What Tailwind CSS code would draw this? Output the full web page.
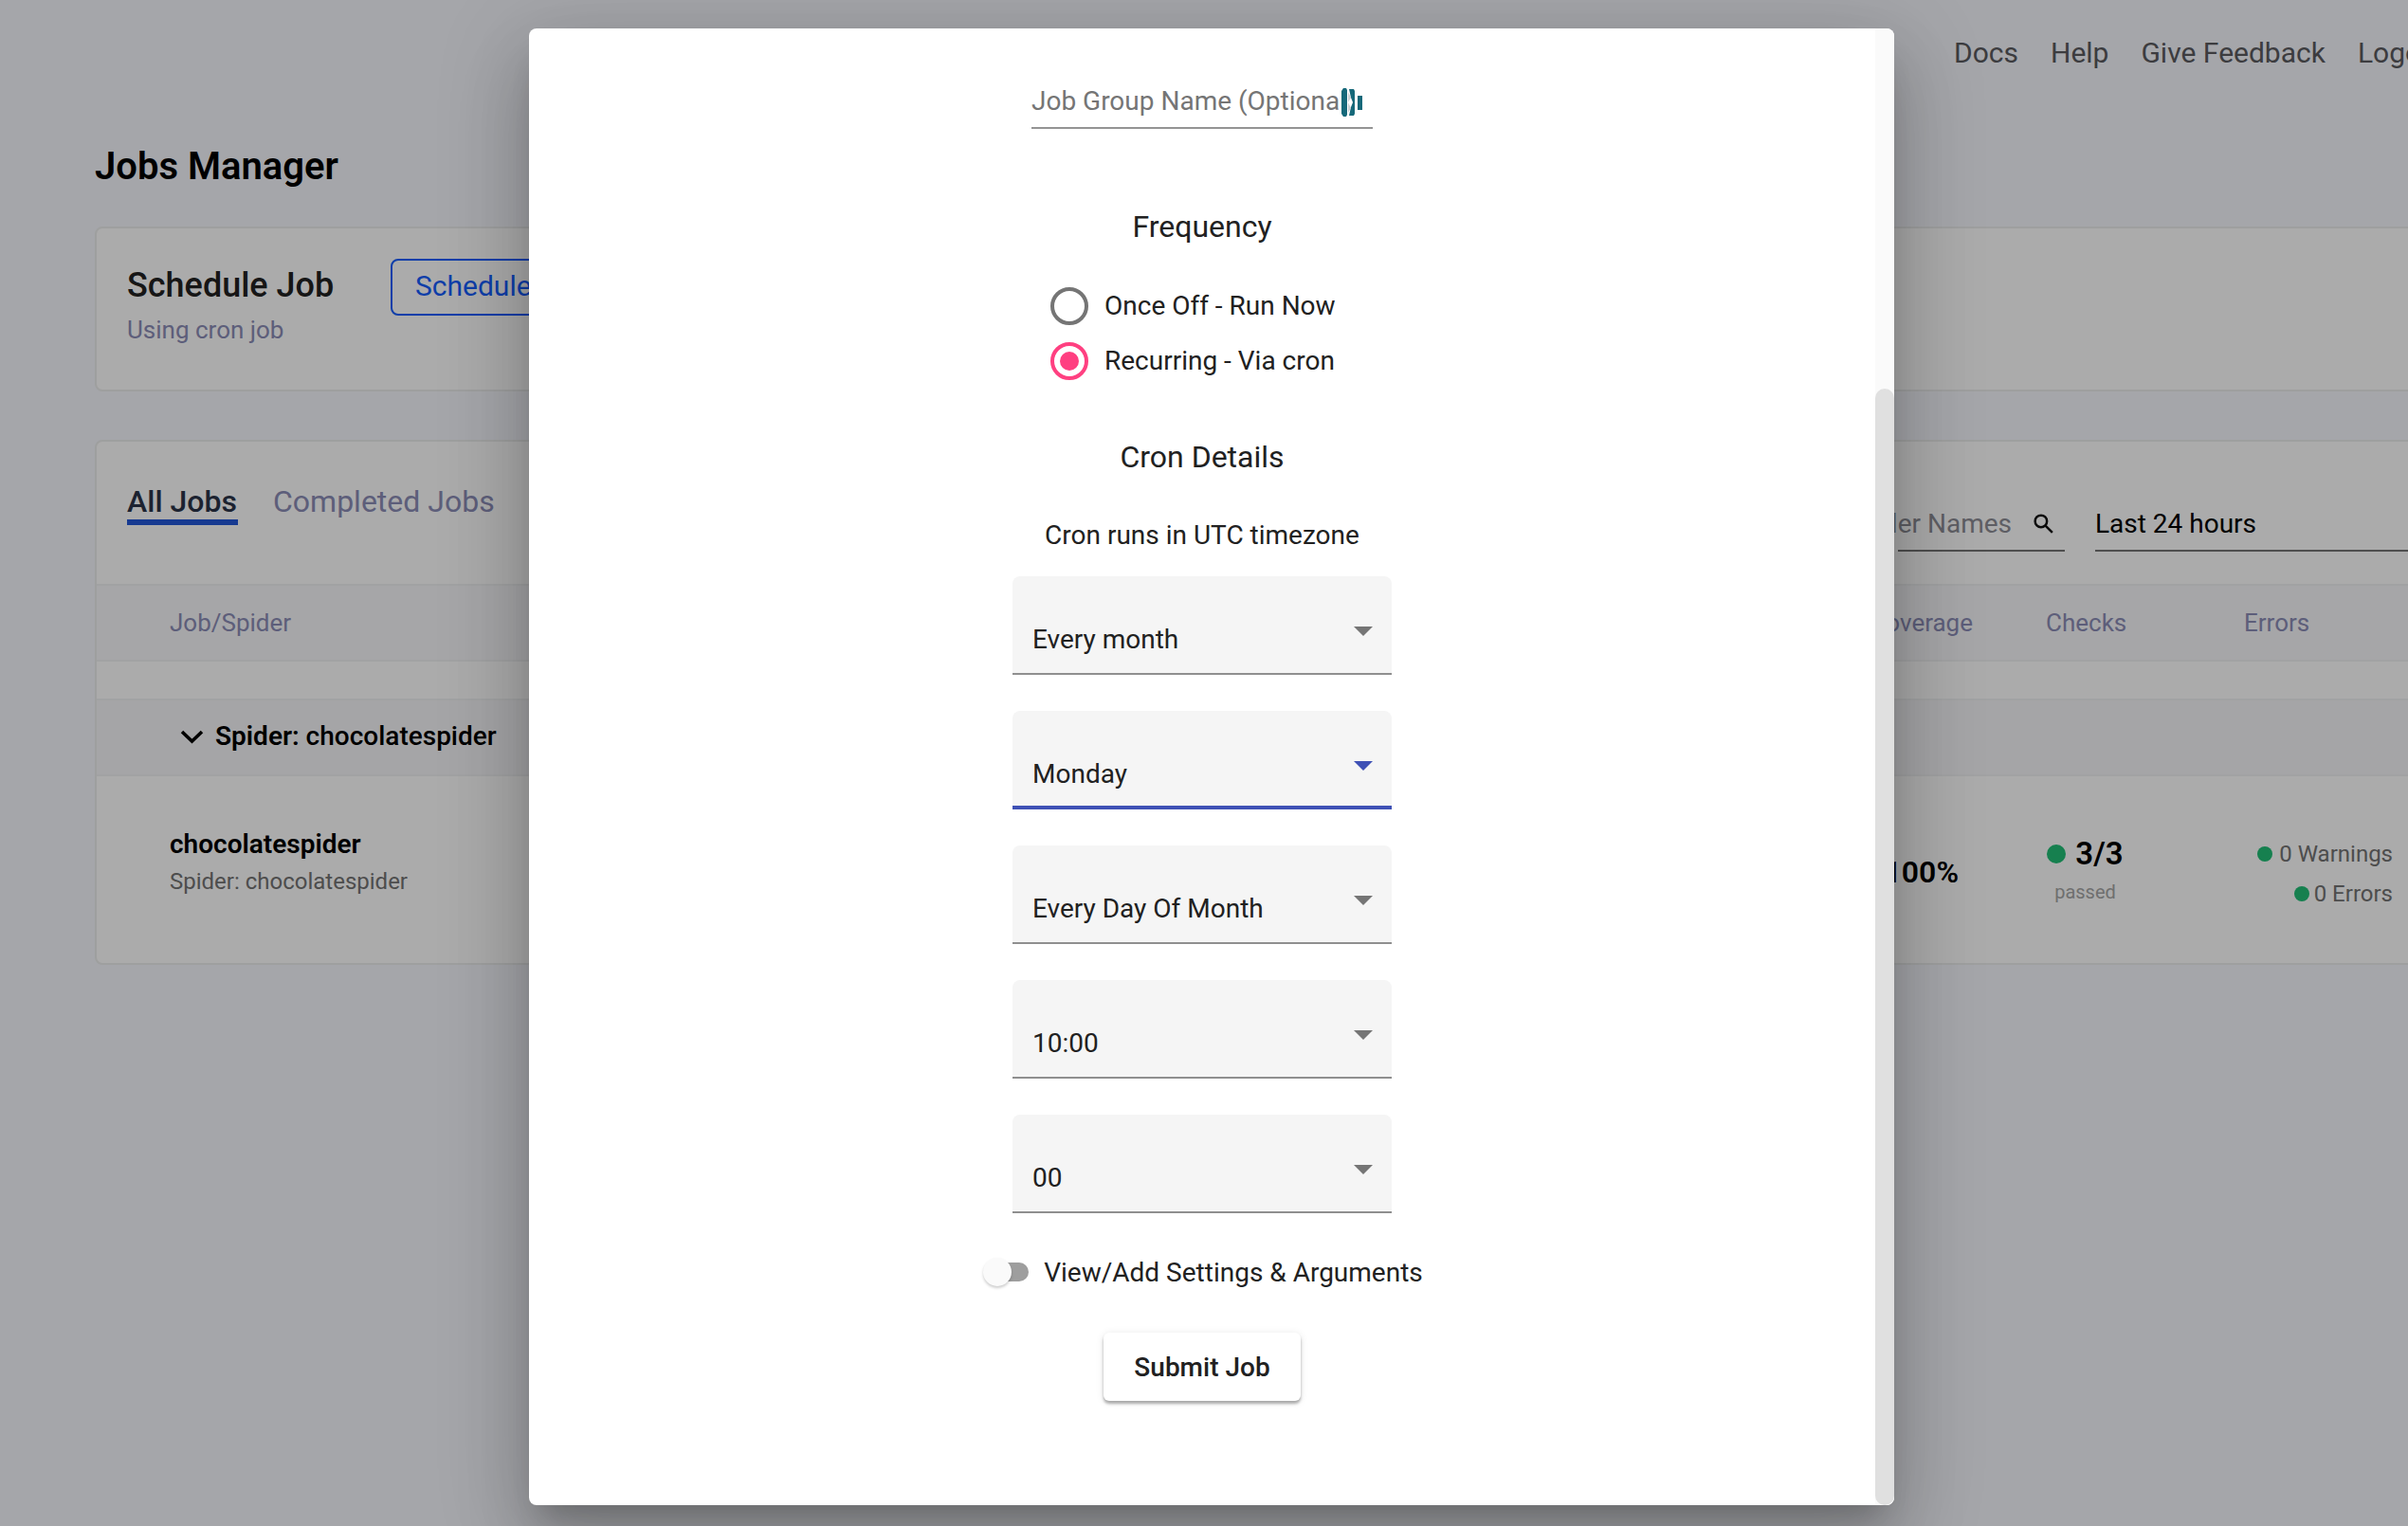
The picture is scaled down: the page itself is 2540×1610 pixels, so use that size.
<!DOCTYPE html>
<html>
<head>
<meta charset="utf-8">
<script src="https://cdn.jsdelivr.net/npm/@tailwindcss/browser@4"></script>
<title>Jobs Manager</title>
</head>
<body>
<div class="relative w-[2540px] h-[1610px] overflow-hidden bg-[#f6f8fe] font-['Roboto',sans-serif] text-black">
  <header class="h-[110px] flex items-center pl-[2061px] gap-[34px] text-[30px] font-normal text-[#5a5a5e] whitespace-nowrap">
    <span>Docs</span><span>Help</span><span>Give Feedback</span><span>Logout</span>
  </header>
  <main class="pl-[100px] w-[2700px]">
    <h1 class="h-[44px] mt-[44px] leading-[44px] text-[40px] font-semibold text-black">Jobs Manager</h1>
    <section class="mt-[41px] h-[174px] bg-white border-2 border-[#eceded] rounded-[8px] pl-[32px] pt-[36px] flex gap-[60px]">
      <div class="w-[218px] whitespace-nowrap">
        <div class="text-[36px] leading-[48px] font-medium text-[#222]">Schedule Job</div>
        <div class="text-[26px] leading-[34px] mt-[6px] text-[#8b8cb6]">Using cron job</div>
      </div>
      <div class="mt-[-4px] w-[300px] h-[60px] border-2 border-blue-600 rounded-[8px] pl-[24px] text-[30px] leading-[54px] text-blue-600">Schedule</div>
    </section>
    <section class="mt-[51px] h-[554px] bg-white border-2 border-[#eceded] rounded-[8px]">
      <div class="h-[150px] relative pl-[32px] flex">
        <div class="mt-[42px] h-[46px] text-[32px] leading-[42px] font-medium text-[#2b3348] border-b-[6px] border-[#2357d9] w-[117px] whitespace-nowrap">All Jobs</div>
        <div class="mt-[42px] ml-[37px] text-[32px] leading-[42px] text-[#8b8cb6] whitespace-nowrap">Completed Jobs</div>
        <div class="absolute top-[56px] left-[1900px] w-[176px] h-[60px] pt-[3px] border-b-2 border-[#777] flex items-center justify-end pr-[10px] gap-[21px]">
          <span class="text-[28px] text-[#8d8d95] whitespace-nowrap">Crawler Names</span>
          <svg class="w-[25px] h-[25px] shrink-0" viewBox="0 0 24 24" fill="none" stroke="#111" stroke-width="2.4"><circle cx="9.5" cy="9.5" r="6"/><path d="M14 14l7 7"/></svg>
        </div>
        <div class="absolute top-[56px] left-[2108px] w-[500px] h-[60px] pt-[3px] border-b-2 border-[#777] flex items-center text-[28px] font-normal text-black">Last 24 hours</div>
      </div>
      <div class="h-[82px] bg-[#f8f8fb] border-y-2 border-[#f1f2f4] grid grid-cols-[1702px_200px_77px_82px_127px_157px] items-center pl-[77px] text-[26px] text-[#8b8cb6]">
        <div>Job/Spider</div>
        <div class="text-right">Coverage</div>
        <div></div>
        <div class="text-center">Checks</div>
        <div></div>
        <div>Errors</div>
      </div>
      <div class="h-[39px] bg-white"></div>
      <div class="h-[82px] bg-[#f7f7f9] border-y-2 border-[#f1f2f4] flex items-center pl-[88px] gap-[12px] text-[28px] pb-[2px]">
        <svg class="w-[25px] h-[17px]" viewBox="0 0 25 17" fill="none" stroke="#000" stroke-width="3.6"><path d="M2 3l10.5 10L23 3"/></svg>
        <span class="whitespace-nowrap"><span class="font-semibold">Spider:</span> <span class="font-medium">chocolatespider</span></span>
      </div>
      <div class="h-[198px] grid grid-cols-[1702px_200px_77px_82px_127px_157px] items-center pl-[77px]">
        <div class="whitespace-nowrap pb-[16px]">
          <div class="text-[28px] leading-[36px] font-semibold text-black">chocolatespider</div>
          <div class="text-[24px] leading-[34px] mt-[4px] text-[#737373]">Spider: chocolatespider</div>
        </div>
        <div class="text-right text-[32px] font-semibold pr-[15px] pt-[4px]">100%</div>
        <div></div>
        <div class="flex flex-col items-center pl-[1px]">
          <div class="flex items-center gap-[10px] text-[33px] leading-[38px] font-semibold whitespace-nowrap"><i class="block w-[20px] h-[20px] rounded-full bg-[#21bf77]"></i>3/3</div>
          <div class="text-[20px] leading-[26px] mt-[8px] text-[#a6a6a6]">passed</div>
        </div>
        <div></div>
        <div class="flex flex-col items-end text-[24px] leading-[34px] text-[#737373] whitespace-nowrap gap-[8px] pt-[8px]">
          <div class="flex items-center gap-[7px]"><i class="block w-[16px] h-[16px] rounded-full bg-[#21bf77]"></i>0 Warnings</div>
          <div class="flex items-center gap-[5px]"><i class="block w-[16px] h-[16px] rounded-full bg-[#21bf77]"></i>0 Errors</div>
        </div>
      </div>
    </section>
  </main>

  <div class="absolute inset-0 bg-black/[0.33]"></div>

  <div class="absolute left-[558px] top-[30px] w-[1440px] h-[1558px] bg-white rounded-[8px] overflow-hidden flex shadow-[0_22px_30px_-14px_rgba(0,0,0,0.2),0_48px_76px_6px_rgba(0,0,0,0.14),0_18px_92px_16px_rgba(0,0,0,0.12)] font-['Roboto',sans-serif] text-[#212121]">
    <div class="w-[1420px] flex flex-col items-center text-[28px]">
      <div class="relative mt-[48px] w-[360px] h-[58px] border-b-2 border-[#949494] text-[#757575] leading-[58px] overflow-hidden whitespace-nowrap">
        Job Group Name (Optional)
        <div class="absolute top-0 left-[327px] w-[33px] h-[56px] bg-white"></div>
        <svg class="absolute left-[327px] top-[15px] w-[22px] h-[30px]" viewBox="0 0 22 30" fill="#16697a"><path d="M2 0h3l1 2v26l-1 2H2l-2-3V3z"/><path d="M8 1h5l1 2v24l-1 2H8l2-9 2-5-2-5z"/><path d="M17 8h5v15h-5z"/><path d="M7 4l3 6-3 5 3 6-3 5z" fill="#c9cfd2"/></svg>
      </div>
      <div class="mt-[83px] text-[32px] leading-[40px]">Frequency</div>
      <div class="mt-[45px] w-[320px] flex flex-col gap-[20px]">
        <label class="h-[38px] flex items-center gap-[17px] whitespace-nowrap">
          <span class="w-[40px] h-[40px] rounded-full border-[4px] border-[#757575] shrink-0"></span>Once Off - Run Now
        </label>
        <label class="h-[38px] flex items-center gap-[17px] whitespace-nowrap">
          <span class="w-[40px] h-[40px] rounded-full border-[4px] border-[#ff4081] shrink-0 flex items-center justify-center"><i class="block w-[20px] h-[20px] rounded-full bg-[#ff4081]"></i></span>Recurring - Via cron
        </label>
      </div>
      <div class="mt-[62px] text-[32px] leading-[40px]">Cron Details</div>
      <div class="mt-[45px] leading-[36px]">Cron runs in UTC timezone</div>
      <div class="mt-[25px] w-[400px] flex flex-col gap-[38px]">
        <div class="relative h-[104px] bg-[#f5f5f5] rounded-t-[8px] border-b-2 border-[#8f8f8f] pl-[21px] pt-[48px] leading-[38px]">Every month
          <svg class="absolute right-[20px] top-[53px] w-[20px] h-[10px]" viewBox="0 0 20 10" fill="#757575"><path d="M0 0h20L10 10z"/></svg>
        </div>
        <div class="relative h-[104px] bg-[#f5f5f5] rounded-t-[8px] border-b-4 border-[#3f51b5] pl-[21px] pt-[48px] leading-[38px]">Monday
          <svg class="absolute right-[20px] top-[53px] w-[20px] h-[10px]" viewBox="0 0 20 10" fill="#3f51b5"><path d="M0 0h20L10 10z"/></svg>
        </div>
        <div class="relative h-[104px] bg-[#f5f5f5] rounded-t-[8px] border-b-2 border-[#8f8f8f] pl-[21px] pt-[48px] leading-[38px]">Every Day Of Month
          <svg class="absolute right-[20px] top-[53px] w-[20px] h-[10px]" viewBox="0 0 20 10" fill="#757575"><path d="M0 0h20L10 10z"/></svg>
        </div>
        <div class="relative h-[104px] bg-[#f5f5f5] rounded-t-[8px] border-b-2 border-[#8f8f8f] pl-[21px] pt-[48px] leading-[38px]">10:00
          <svg class="absolute right-[20px] top-[53px] w-[20px] h-[10px]" viewBox="0 0 20 10" fill="#757575"><path d="M0 0h20L10 10z"/></svg>
        </div>
        <div class="relative h-[104px] bg-[#f5f5f5] rounded-t-[8px] border-b-2 border-[#8f8f8f] pl-[21px] pt-[48px] leading-[38px]">00
          <svg class="absolute right-[20px] top-[53px] w-[20px] h-[10px]" viewBox="0 0 20 10" fill="#757575"><path d="M0 0h20L10 10z"/></svg>
        </div>
      </div>
      <div class="mt-[42px] h-[40px] flex items-center gap-[16px] whitespace-nowrap">
        <span class="relative block w-[50px] h-[20px]">
          <span class="absolute right-0 top-0 w-[38px] h-[20px] rounded-full bg-[#9e9e9e]"></span>
          <span class="absolute left-[2px] top-[-5px] w-[30px] h-[30px] rounded-full bg-[#fafafa] shadow-[0_2px_3px_rgba(0,0,0,0.2)]"></span>
        </span>
        <span class="pt-[1px]">View/Add Settings &amp; Arguments</span>
      </div>
      <button class="mt-[44px] w-[208px] h-[72px] pt-[1px] bg-white rounded-[6px] font-medium text-[28px] text-[#212121] shadow-[0_3px_3px_rgba(0,0,0,0.3),0_1px_8px_rgba(0,0,0,0.1)]">Submit Job</button>
    </div>
    <div class="w-[20px] h-full bg-[#fafafa] flex flex-col justify-end">
      <div class="h-[1178px] bg-[#e0e0e0] rounded-[10px]"></div>
    </div>
  </div>
</div>
</body>
</html>
